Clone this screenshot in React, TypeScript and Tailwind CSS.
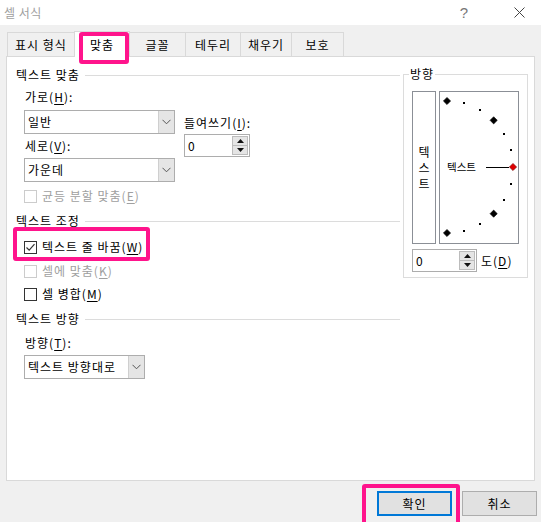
import React from "react";

const FONT = { fontFamily: '"Noto Sans CJK KR", "Noto Sans", sans-serif' };

function U({ c }: { c: string }) {
  return <span className="underline underline-offset-[2px] decoration-[1px]">{c}</span>;
}

function Check({ checked, disabled, children }: { checked?: boolean; disabled?: boolean; children: React.ReactNode }) {
  return (
    <div className="flex items-center h-[18px]">
      <div
        className={`w-[13px] h-[13px] border bg-white flex items-center justify-center ${
          disabled ? "border-[#cccccc]" : "border-[#333333]"
        }`}
      >
        {checked && (
          <svg width="11" height="11" viewBox="0 0 11 11">
            <path d="M1.5 5.5 L4.2 8.2 L9.5 2.2" stroke="#333" strokeWidth="1.2" fill="none" />
          </svg>
        )}
      </div>
      <span className={`ml-[5px] leading-[18px] ${disabled ? "text-[#a0a0a0]" : "text-black"}`}>{children}</span>
    </div>
  );
}

function Chevron() {
  return (
    <svg width="9" height="6" viewBox="0 0 9 6">
      <path d="M0.5 0.8 L4.5 4.8 L8.5 0.8" stroke="#555" strokeWidth="1" fill="none" />
    </svg>
  );
}

function Select({ value, w }: { value: string; w: string }) {
  return (
    <div className={`${w} h-[24px] border border-[#adadad] bg-white flex items-stretch`}>
      <div className="flex-1 pl-[3px] flex items-center leading-[18px]">{value}</div>
      <div className="w-[16px] bg-[#e5e5e5] border-l border-[#cfcfcf] flex items-center justify-center">
        <Chevron />
      </div>
    </div>
  );
}

function Spin({ w, value }: { w: string; value: string }) {
  return (
    <div className={`${w} h-[23px] border border-[#adadad] bg-white flex items-stretch`}>
      <div className="flex-1 pl-[3px] flex items-center leading-[18px]">{value}</div>
      <div className="w-[17px] py-[1px] pr-[1px] flex flex-col gap-0">
        <div className="flex-1 bg-[#e5e5e5] border border-[#bcbcbc] flex items-center justify-center">
          <svg width="7" height="4" viewBox="0 0 7 4">
            <path d="M0 4 L3.5 0 L7 4 Z" fill="#111" />
          </svg>
        </div>
        <div className="flex-1 bg-[#e5e5e5] border border-[#bcbcbc] border-t-0 flex items-center justify-center">
          <svg width="7" height="4" viewBox="0 0 7 4">
            <path d="M0 0 L3.5 4 L7 0 Z" fill="#111" />
          </svg>
        </div>
      </div>
    </div>
  );
}

function Header({ children }: { children: React.ReactNode }) {
  return (
    <div className="flex items-center h-[18px]">
      <span className="leading-[18px] text-black">{children}</span>
      <div className="flex-1 ml-[5px] h-px bg-[#dcdcdc]" />
    </div>
  );
}

function Dial() {
  const cx = 7;
  const cy = 75;
  const r = 66;
  const items: React.ReactNode[] = [];
  for (let i = 0; i <= 12; i++) {
    const a = ((90 - i * 15) * Math.PI) / 180;
    const x = cx + r * Math.cos(a);
    const y = cy - r * Math.sin(a);
    if (i % 3 === 0) {
      const red = i === 6;
      const s = 3.6;
      items.push(
        <polygon
          key={i}
          points={`${x},${y - s} ${x + s},${y} ${x},${y + s} ${x - s},${y}`}
          fill={red ? "#e00000" : "#000"}
          stroke={red ? "#700000" : "#000"}
          strokeWidth="0.6"
        />
      );
    } else {
      items.push(<rect key={i} x={Math.round(x) - 1} y={Math.round(y) - 1} width="2" height="2" fill="#000" />);
    }
  }
  return (
    <svg className="absolute left-0 top-0" width="78" height="151" viewBox="0 0 78 151">
      <line x1="46" y1="75.5" x2="69" y2="75.5" stroke="#000" strokeWidth="1" />
      {items}
    </svg>
  );
}

function Tab({ label, w, active }: { label: string; w: string; active?: boolean }) {
  return (
    <div
      className={`${w} -ml-px flex items-center justify-center border border-[#d9d9d9] border-b-0 leading-[18px] ${
        active ? "h-[26px] bg-white relative z-10 -mb-px" : "h-[24px] bg-[#f0f0f0]"
      }`}
    >
      {label}
    </div>
  );
}

export default function App() {
  return (
    <div
      className="relative w-[541px] h-[522px] bg-[#f0f0f0] text-[12px] tracking-[1px] text-black overflow-hidden"
      style={FONT}
    >
      {/* title bar */}
      <div className="h-[25px] bg-white flex items-center">
        <span className="ml-[4px] text-[#a0a0a0] leading-[18px] tracking-[0.5px]">셀 서식</span>
        <div className="flex-1" />
        <span
          className="text-[15px] text-[#777] leading-[18px] mr-[46px] tracking-normal"
          style={{ fontFamily: '"Liberation Sans", sans-serif' }}
        >
          ?
        </span>
        <svg width="11" height="11" viewBox="0 0 11 11" className="mr-[16px]">
          <path d="M0.5 0.5 L10.5 10.5 M10.5 0.5 L0.5 10.5" stroke="#444" strokeWidth="1" />
        </svg>
      </div>

      {/* tabs */}
      <div className="flex items-end pl-[8px] mt-[5px] h-[26px]">
        <Tab label="표시 형식" w="w-[68px]" />
        <Tab label="맞춤" w="w-[56px]" active />
        <Tab label="글꼴" w="w-[57px]" />
        <Tab label="테두리" w="w-[56px]" />
        <Tab label="채우기" w="w-[52px]" />
        <Tab label="보호" w="w-[53px]" />
      </div>

      {/* panel */}
      <div className="ml-[6px] w-[529px] h-[425px] border border-[#d9d9d9] bg-white flex">
        {/* left column */}
        <div className="w-[393px] pt-[9px] pl-[9px]">
          <Header>텍스트 맞춤</Header>
          <div className="pl-[8px]">
            <div className="mt-[4px] h-[18px] leading-[18px] pl-[1px]">
              가로(<U c="H" />):
            </div>
            <div className="mt-[4px] flex">
              <div className="flex flex-col">
                <Select value="일반" w="w-[151px]" />
                <div className="mt-[3px] h-[18px] leading-[18px] pl-[1px]">
                  세로(<U c="V" />):
                </div>
                <div className="mt-[3px]">
                  <Select value="가운데" w="w-[151px]" />
                </div>
              </div>
              <div className="ml-[9px] flex flex-col">
                <div className="mt-[4px] h-[18px] leading-[18px] text-black">
                  들여쓰기(<U c="I" />):
                </div>
                <div className="mt-[2px]">
                  <Spin w="w-[66px]" value="0" />
                </div>
              </div>
            </div>
            <div className="mt-[5px]">
              <Check disabled>
                균등 분할 맞춤(<U c="E" />)
              </Check>
            </div>
          </div>

          <div className="mt-[7px]">
            <Header>텍스트 조정</Header>
          </div>
          <div className="pl-[8px]">
            <div className="mt-[8px]">
              <Check checked>
                텍스트 줄 바꿈(<U c="W" />)
              </Check>
            </div>
            <div className="mt-[6px]">
              <Check disabled>
                셀에 맞춤(<U c="K" />)
              </Check>
            </div>
            <div className="mt-[5px]">
              <Check>
                셀 병합(<U c="M" />)
              </Check>
            </div>
          </div>

          <div className="mt-[7px]">
            <Header>텍스트 방향</Header>
          </div>
          <div className="pl-[8px]">
            <div className="mt-[6px] h-[18px] leading-[18px] pl-[1px]">
              방향(<U c="T" />):
            </div>
            <div className="mt-[3px]">
              <Select value="텍스트 방향대로" w="w-[121px]" />
            </div>
          </div>
        </div>

        {/* right column: 방향 group */}
        <div className="ml-[3px] mt-[17px] w-[125px] h-[204px] border border-[#dcdcdc] relative pt-[16px] pl-[8px]">
          <span className="absolute -top-[10px] left-[5px] px-[1px] bg-white leading-[18px]">방향</span>
          <div className="flex gap-[3px]">
            <div className="w-[24px] h-[153px] border border-[#8b8f96] flex flex-col items-center justify-center tracking-normal">
              <span className="h-[16px] leading-[16px]">텍</span>
              <span className="h-[16px] leading-[16px]">스</span>
              <span className="h-[16px] leading-[16px]">트</span>
            </div>
            <div className="w-[80px] h-[153px] border border-[#8b8f96] relative">
              <Dial />
              <span className="absolute left-[7px] top-[66px] leading-[18px] text-[10.5px] tracking-normal">텍스트</span>
            </div>
          </div>
          <div className="mt-[5px] flex items-center">
            <Spin w="w-[65px]" value="0" />
            <span className="ml-[4px] leading-[18px]">
              도(<U c="D" />)
            </span>
          </div>
        </div>
      </div>

      {/* buttons */}
      <div className="mt-[10px] flex justify-end pr-[4px] gap-[10px]">
        <div className="w-[75px] h-[25px] bg-[#e1e1e1] border-2 border-[#0078d7] flex items-center justify-center leading-[18px]">
          확인
        </div>
        <div className="w-[75px] h-[25px] bg-[#e1e1e1] border border-[#adadad] flex items-center justify-center leading-[18px]">
          취소
        </div>
      </div>

      {/* pink highlight overlays */}
      <div className="absolute left-[79px] top-[32px] w-[50px] h-[32px] border-[4px] border-[#ff148c] rounded-[3px] pointer-events-none z-20" />
      <div className="absolute left-[13px] top-[227px] w-[137px] h-[34px] border-[4px] border-[#ff148c] rounded-[3px] pointer-events-none z-20" />
      <div className="absolute left-[362px] top-[484px] w-[98px] h-[42px] border-[4px] border-[#ff148c] rounded-[3px] pointer-events-none z-20" />
    </div>
  );
}
